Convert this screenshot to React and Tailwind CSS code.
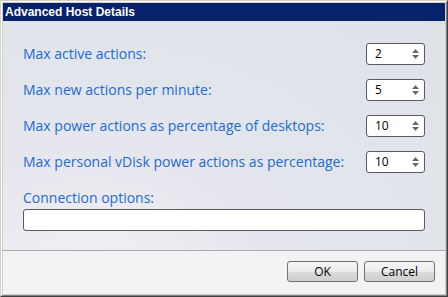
import React from "react";

function Spinner({ value }) {
  return (
    <div className="flex h-[22px] w-[59px] items-center justify-between rounded-[3px] border border-[#5a5a5a] bg-white pl-[8px] pr-[4px] text-[12px] text-black" style={{ fontFamily: '"Open Sans", "Noto Sans", sans-serif' }}>
      <span className="leading-none">{value}</span>
      <svg width="9" height="14" viewBox="0 0 9 14">
        <path d="M4.5 2 L8 6 L1 6 Z" fill="#6a6a6a" />
        <path d="M1 8 L8 8 L4.5 12 Z" fill="#6a6a6a" />
      </svg>
    </div>
  );
}

function Row({ label, value }) {
  return (
    <div className="flex h-[22px] items-center justify-between">
      <span className="text-[14px] leading-none text-[#1b6bd4]">{label}</span>
      <Spinner value={value} />
    </div>
  );
}

function Btn({ children }) {
  return (
    <button className="flex h-[21px] w-[71px] items-center justify-center rounded-[3px] border border-[#707070] bg-[linear-gradient(#f6f6f6_0%,#ebebeb_50%,#dcdcdc_51%,#cfcfcf_100%)] text-[12px] text-black" style={{ fontFamily: '"Open Sans", "Noto Sans", sans-serif' }}>
      {children}
    </button>
  );
}

export default function App() {
  return (
    <div className="h-[297px] w-[448px] border-t border-l border-[#d4d0c8] border-r border-b border-r-[#404040] border-b-[#404040] bg-[#d4d0c8]">
      <div className="flex h-full w-full flex-col border-t border-l border-white border-r border-b border-r-[#808080] border-b-[#808080] p-px">
        <div className="flex h-[18px] items-center bg-[#06226a] pl-[2px] text-[12px] font-bold text-white" style={{ fontFamily: '"Liberation Sans", Arial, sans-serif' }}>
          Advanced Host Details
        </div>
        <div className="flex flex-1 flex-col" style={{ fontFamily: '"Open Sans", "Noto Sans", sans-serif' }}>
          <div className="flex h-[229px] flex-col gap-[14px] bg-[radial-gradient(ellipse_at_20%_110%,#f4f0f4_0%,#e6e6ee_35%,#e2e5ec_55%,#dde2e8_100%)] px-[20px] pt-[22px]">
            <Row label="Max active actions:" value="2" />
            <Row label="Max new actions per minute:" value="5" />
            <Row label="Max power actions as percentage of desktops:" value="10" />
            <Row label="Max personal vDisk power actions as percentage:" value="10" />
            <div className="flex flex-col pt-[1px]">
              <span className="h-[21px] text-[14px] leading-[20px] text-[#1b6bd4]">Connection options:</span>
              <div className="h-[22px] rounded-[3px] border border-[#5a5a5a] bg-white" />
            </div>
          </div>
          <div className="flex flex-1 items-start justify-end gap-[6px] border-t border-[#a8a8b0] bg-[#f5f2f6] pr-[10px] pt-[10px]">
            <Btn>OK</Btn>
            <Btn>Cancel</Btn>
          </div>
        </div>
      </div>
    </div>
  );
}
